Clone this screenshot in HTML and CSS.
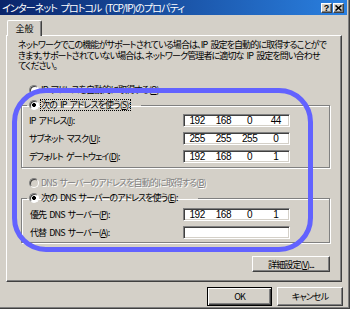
FILE: index.html
```html
<!DOCTYPE html>
<html lang="ja">
<head>
    <meta charset="UTF-8">
    <title>インターネット プロトコル (TCP/IP)のプロパティ</title>
    <link rel="stylesheet" href="styles.css">
</head>
<body>
<div class="window">
    <div class="titlebar">
        <span class="title">インターネット プロトコル (TCP/IP)のプロパティ</span>
        <div class="title-buttons">
            <span class="tbtn help">?</span>
            <span class="tbtn">
                <svg width="7" height="6" viewBox="0 0 7 6"><path d="M0.5 0.5 L6.5 5.5 M6.5 0.5 L0.5 5.5" stroke="#000" stroke-width="1.6" fill="none"/></svg>
            </span>
        </div>
    </div>

    <div class="tabs"><div class="tab">全般</div></div>

    <div class="panel">
        <p class="intro">
            <span>ネットワークでこの機能がサポートされている場合は、IP 設定を自動的に取得することがで</span>
            <span>きます。サポートされていない場合は、ネットワーク管理者に適切な IP 設定を問い合わせ</span>
            <span>てください。</span>
        </p>

        <div class="radio first"><span class="circle"></span><span class="rtext">IP アドレスを自動的に取得する(<u>O</u>)</span></div>

        <fieldset class="group">
            <legend class="legend-ip"><span class="circle checked"></span><span class="rtext focus">次の IP アドレスを使う(<u>S</u>):</span></legend>
            <div class="rows">
                <div class="row">
                    <span>IP アドレス(<u>I</u>):</span>
                    <div class="ipfield"><span>192</span><span>168</span><span>0</span><span>44</span></div>
                </div>
                <div class="row">
                    <span>サブネット マスク(<u>U</u>):</span>
                    <div class="ipfield"><span>255</span><span>255</span><span>255</span><span>0</span></div>
                </div>
                <div class="row">
                    <span>デフォルト ゲートウェイ(<u>D</u>):</span>
                    <div class="ipfield"><span>192</span><span>168</span><span>0</span><span>1</span></div>
                </div>
            </div>
        </fieldset>

        <div class="radio disabled"><span class="circle"></span><span class="rtext">DNS サーバーのアドレスを自動的に取得する(<u>B</u>)</span></div>

        <fieldset class="group dns">
            <legend class="legend-dns"><span class="circle checked"></span><span class="rtext">次の DNS サーバーのアドレスを使う(<u>E</u>):</span></legend>
            <div class="rows">
                <div class="row">
                    <span class="dns-label">優先 DNS サーバー(<u>P</u>):</span>
                    <div class="ipfield"><span>192</span><span>168</span><span>0</span><span>1</span></div>
                </div>
                <div class="row">
                    <span class="dns-label">代替 DNS サーバー(<u>A</u>):</span>
                    <div class="ipfield"></div>
                </div>
            </div>
        </fieldset>

        <div class="advanced"><button class="btn adv">詳細設定(<u>V</u>)...</button></div>
    </div>

    <div class="actions">
        <button class="btn default">OK</button>
        <button class="btn">キャンセル</button>
    </div>

    <div class="highlight"></div>
</div>
</body>
</html>
```

FILE: styles.css
```css
body {
    margin: 0;
    width: 350px;
    height: 309px;
    overflow: hidden;
    background: #d4d0c8;
    font-family: "Noto Sans CJK JP", sans-serif;
    font-size: 9px;
    font-feature-settings: "palt";
    letter-spacing: -0.9px;
    word-spacing: 2px;
    color: #000;
}
.window {
    position: relative;
    height: 309px;
    box-sizing: border-box;
    padding-right: 2px;
    border-right: 1px solid #404040;
    border-bottom: 1px solid #404040;
    box-shadow: inset -1px -1px #808080;
}
.titlebar {
    height: 15px;
    display: flex;
    align-items: center;
    justify-content: space-between;
    padding: 0 3px 0 2px;
    background: linear-gradient(to right, #0a246a, #2a80e0);
    color: #fff;
}
.title {
    font-size: 10px;
    line-height: 15px;
    white-space: nowrap;
}
.title-buttons {
    display: flex;
    gap: 1px;
}
.tbtn {
    width: 11px;
    height: 10px;
    box-sizing: border-box;
    display: flex;
    align-items: center;
    justify-content: center;
    background: #d4d0c8;
    border: 1px solid;
    border-color: #fff #404040 #404040 #fff;
    box-shadow: inset -1px -1px #808080;
    color: #000;
}
.tbtn.help {
    font-family: "Liberation Sans", sans-serif;
    font-weight: bold;
    font-size: 9px;
    letter-spacing: 0;
    line-height: 8px;
}
.tabs {
    padding: 5px 0 0 7px;
}
.tab {
    position: relative;
    z-index: 1;
    width: 35px;
    height: 16px;
    margin-bottom: -1px;
    box-sizing: border-box;
    background: #d4d0c8;
    border: 1px solid;
    border-color: #fff #404040 transparent #fff;
    border-bottom: none;
    border-radius: 2px 2px 0 0;
    box-shadow: inset -1px 0 #808080;
    text-align: center;
    line-height: 15px;
    letter-spacing: 0;
}
.panel {
    margin-left: 6px;
    width: 336px;
    height: 247px;
    box-sizing: border-box;
    border: 1px solid;
    border-color: #fff #404040 #404040 #fff;
    box-shadow: inset -1px -1px #808080;
    padding: 4px 11px 0 11px;
}
.intro {
    margin: 0;
    line-height: 10.5px;
}
.intro span {
    display: block;
    white-space: nowrap;
}
.radio {
    display: flex;
    align-items: center;
    height: 12px;
    padding-left: 11px;
    white-space: nowrap;
}
.radio.first {
    margin-top: 12.5px;
}
.radio.disabled {
    margin-top: 9px;
    color: #808080;
    text-shadow: 1px 1px #fff;
}
.radio.disabled .circle {
    background: #d4d0c8;
}
.circle {
    flex: none;
    width: 10px;
    height: 10px;
    box-sizing: border-box;
    border-radius: 50%;
    background: #fff;
    border: 1px solid;
    border-color: #808080 #fff #fff #808080;
    box-shadow: inset 1px 1px #404040;
}
.circle.checked {
    background: radial-gradient(circle, #000 0 1.8px, #fff 2.2px);
}
.rtext {
    margin-left: 1px;
    padding: 0 1px;
    line-height: 12px;
}
.focus {
    outline: 1px dotted #000;
    outline-offset: -1px;
}
.group {
    margin: 3px 0 0 3px;
    padding: 3px 39px 4px 7px;
    min-width: 0;
    border: 1px solid #808080;
    box-shadow: inset 1px 1px #fff, 1px 1px #fff;
}
.group.dns {
    margin-top: 3px;
    padding-top: 4px;
    padding-bottom: 3px;
}
.group legend {
    display: flex;
    align-items: center;
    height: 12px;
    margin-left: -2px;
    padding: 0 10px 0 2px;
    white-space: nowrap;
}
.group .legend-dns {
    padding-right: 19px;
}
.rows {
    display: flex;
    flex-direction: column;
    gap: 5px;
}
.row {
    display: flex;
    align-items: center;
    justify-content: space-between;
    height: 13px;
    white-space: nowrap;
}
.dns-label {
    margin-left: 1px;
}
.ipfield {
    width: 107px;
    height: 13px;
    box-sizing: border-box;
    display: flex;
    background: #fff;
    border: 1px solid;
    border-color: #808080 #fff #fff #808080;
    box-shadow: inset 1px 1px #404040, inset -1px -1px #d4d0c8;
    font-family: "Liberation Sans", sans-serif;
    font-size: 10px;
    letter-spacing: -0.5px;
    line-height: 11px;
}
.ipfield span {
    flex: 1;
    text-align: center;
}
.advanced {
    display: flex;
    justify-content: flex-end;
    margin-top: 13px;
}
.btn {
    box-sizing: border-box;
    padding: 0;
    background: #d4d0c8;
    border: 1px solid;
    border-color: #fff #404040 #404040 #fff;
    box-shadow: inset -1px -1px #808080;
    font: inherit;
    letter-spacing: inherit;
    word-spacing: inherit;
    color: #000;
}
.btn.adv {
    width: 78px;
    height: 16px;
}
.actions {
    display: flex;
    justify-content: flex-end;
    gap: 5px;
    margin-top: 5px;
    padding-right: 4px;
}
.actions .btn {
    width: 66px;
    height: 19px;
}
.actions .btn.default {
    width: 65px;
    border-color: #000;
    box-shadow: inset 1px 1px #fff, inset -1px -1px #404040, inset -2px -2px #808080;
}
.highlight {
    position: absolute;
    left: 12px;
    top: 88px;
    width: 301px;
    height: 164px;
    box-sizing: border-box;
    border: 5px solid #6262ff;
    border-radius: 34px;
    pointer-events: none;
}
```
